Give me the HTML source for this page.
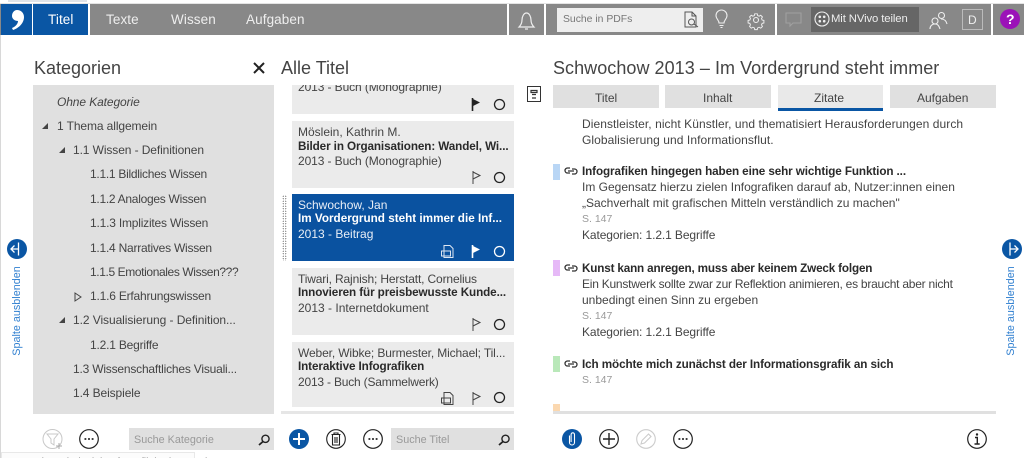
<!DOCTYPE html>
<html><head><meta charset="utf-8">
<style>
html,body{margin:0;padding:0;background:#fff;}
#p{position:relative;width:1024px;height:458px;overflow:hidden;background:#fff;font-family:"Liberation Sans",sans-serif;color:#444;font-size:12px;}
.b{position:absolute;}
.t{position:absolute;white-space:nowrap;line-height:16px;}
.h{font-size:18px;line-height:24px;color:#444;}
.n{font-size:13.5px;line-height:20px;color:#eee;letter-spacing:.1px;}
.k{font-size:12px;color:#444;letter-spacing:-.1px;}
.s{font-weight:bold;font-size:11.7px;color:#2a2a2a;letter-spacing:-.1px;}
.g{color:#999;font-size:10.5px;}
.v{color:#2f7fd0;font-size:10.8px;transform:translate(-50%,-50%) rotate(-90deg);}
svg{position:absolute;overflow:visible;}
</style></head><body><div id="p">
<!-- top nav -->
<div class="b" style="left:8px;top:0;width:79px;height:2px;background:#dfe3e8;"></div>
<div class="b" style="left:0;top:4px;width:1024px;height:31px;background:#888;"></div>
<div class="b" style="left:0;top:3px;width:1024px;height:1px;background:#e4e4e4;"></div>
<div class="b" style="left:1px;top:4px;width:31px;height:31px;background:#0a56a4;"></div>
<div class="b" style="left:32px;top:4px;width:1px;height:31px;background:#fff;"></div>
<div class="b" style="left:33px;top:4px;width:55px;height:31px;background:#0a56a4;"></div>
<div class="b" style="left:88px;top:4px;width:1.5px;height:31px;background:#fff;"></div>
<svg style="left:0;top:0" width="32" height="34"><path d="M17 10c4 0 7 3 7 7 0 6-5 11-11 13l-1-2c3-1 6-4 6-7-3 0-6-2-6-5 0-3 2-6 5-6z" fill="#fff"/></svg>
<div class="t n" style="left:48px;top:10px;color:#fff;">Titel</div>
<div class="t n" style="left:106px;top:10px;">Texte</div>
<div class="t n" style="left:171px;top:10px;">Wissen</div>
<div class="t n" style="left:246px;top:10px;">Aufgaben</div>
<div class="b" style="left:507px;top:4px;width:1.5px;height:31px;background:#fff;"></div>
<div class="b" style="left:544px;top:4px;width:1.5px;height:31px;background:#fff;"></div>
<div class="b" style="left:775px;top:4px;width:1.5px;height:31px;background:#fff;"></div>
<div class="b" style="left:991px;top:4px;width:1.5px;height:31px;background:#fff;"></div>
<!-- bell -->
<svg style="left:518px;top:11px" width="17" height="20" fill="none" stroke="#eee" stroke-width="1.2"><path d="M1 16c2-2 3-4 3-7 0-3 1.600-7 4.500-7S13 6 13 9c0 3 1 5 3 7z"/><path d="M7 18h3"/></svg>
<!-- search pdf -->
<div class="b" style="left:557px;top:8px;width:146px;height:24px;background:#eee;"></div>
<div class="t" style="left:563px;top:12px;color:#777;font-size:10.4px;">Suche in PDFs</div>
<svg style="left:684px;top:11px" width="18" height="18" fill="none" stroke="#555" stroke-width="1"><path d="M1 1h7l4 4v11H1zM8 1v4h4"/><circle cx="7.500" cy="11" r="3"/><path d="M10 13l4 3"/></svg>
<!-- bulb -->
<svg style="left:715px;top:10px" width="13" height="19" fill="none" stroke="#eee" stroke-width="1.100"><path d="M4 13c0-3-3-4-3-7.500a5.300 5.300 0 0 1 11 0C12 9 9 10 9 13zM4.500 15.500h4M5.500 17.500h2"/></svg>
<!-- gear -->
<svg style="left:748px;top:12px" width="16" height="16" fill="none" stroke="#eee" stroke-width="1.100"><circle cx="8" cy="8" r="2.500"/><path d="M6.500 0.800h3l.4 2 1.800.8 1.800-1.100 2 2-1.100 1.800.8 1.800 2 .4v3l-2 .4-.8 1.800 1.100 1.800-2 2-1.800-1.100-1.800.8-.4 2h-3l-.4-2-1.800-.8-1.800 1.100-2-2 1.100-1.800-.8-1.800-2-.4v-3l2-.4.800-1.800-1.100-1.800 2-2 1.800 1.100 1.800-.8z" transform="scale(.86) translate(1.300 1.300)"/></svg>
<!-- comment -->
<svg style="left:785px;top:12px" width="17" height="16" fill="none" stroke="#a0a0a0" stroke-width="1.100"><path d="M1 1h15v10H8l-3 3v-3H1z"/></svg>
<!-- nvivo -->
<div class="b" style="left:811px;top:7px;width:108px;height:25px;background:#666;"></div>
<svg style="left:814px;top:11px" width="16" height="16" fill="none" stroke="#eee" stroke-width="1.100"><circle cx="8" cy="8" r="7"/><g fill="#eee" stroke="none"><circle cx="5.800" cy="5.800" r="1.300"/><circle cx="10.200" cy="5.800" r="1.300"/><circle cx="5.800" cy="10.200" r="1.300"/><circle cx="10.200" cy="10.200" r="1.300"/></g></svg>
<div class="t" style="left:831px;top:11px;color:#eee;font-size:11.3px;letter-spacing:-.1px;">Mit NVivo teilen</div>
<!-- users -->
<svg style="left:929px;top:11px" width="20" height="19" fill="none" stroke="#eee" stroke-width="1.100"><circle cx="12.500" cy="4.500" r="3"/><circle cx="6" cy="10" r="3"/><path d="M1 18c0-3 2-5 5-5s4 2 5 5M12 8c3 0 5 1 6 5"/></svg>
<div class="b" style="left:962px;top:9px;width:19px;height:19px;border:1px solid #bbb;"></div>
<div class="t" style="left:968px;top:12px;color:#eee;font-size:12px;">D</div>
<div class="b" style="left:1000px;top:9px;width:20px;height:20px;border-radius:50%;background:#9b12b8;"></div>
<div class="t" style="left:1006px;top:11px;color:#fff;font-weight:bold;font-size:14px;">?</div>

<!-- Kategorien -->
<div class="b" style="left:33px;top:85px;width:241px;height:329px;background:#e0e0e0;"></div>
<div class="t k" style="left:57px;top:94px;font-style:italic;">Ohne Kategorie</div>
<div class="t k" style="left:57px;top:118px;">1 Thema allgemein</div>
<div class="t k" style="left:73px;top:142px;">1.1 Wissen - Definitionen</div>
<div class="t k" style="left:90px;top:166px;letter-spacing:-.28px;">1.1.1 Bildliches Wissen</div>
<div class="t k" style="left:90px;top:191px;letter-spacing:-.28px;">1.1.2 Analoges Wissen</div>
<div class="t k" style="left:90px;top:215px;letter-spacing:-.2px;">1.1.3 Implizites Wissen</div>
<div class="t k" style="left:90px;top:240px;letter-spacing:-.24px;">1.1.4 Narratives Wissen</div>
<div class="t k" style="left:90px;top:264px;letter-spacing:-.39px;">1.1.5 Emotionales Wissen???</div>
<div class="t k" style="left:90px;top:288px;letter-spacing:-.2px;">1.1.6 Erfahrungswissen</div>
<div class="t k" style="left:73px;top:312px;letter-spacing:-.07px;">1.2 Visualisierung - Definition...</div>
<div class="t k" style="left:90px;top:337px;letter-spacing:-.2px;">1.2.1 Begriffe</div>
<div class="t k" style="left:73px;top:361px;letter-spacing:-.2px;">1.3 Wissenschaftliches Visuali...</div>
<div class="t k" style="left:73px;top:385px;">1.4 Beispiele</div>
<svg style="left:41px;top:122px" width="8" height="8"><path d="M7 1v6H1z" fill="#444"/></svg>
<svg style="left:58px;top:146px" width="8" height="8"><path d="M7 1v6H1z" fill="#444"/></svg>
<svg style="left:58px;top:316px" width="8" height="8"><path d="M7 1v6H1z" fill="#444"/></svg>
<svg style="left:74px;top:292px" width="8" height="10" fill="none" stroke="#444" stroke-width="1"><path d="M1 1l6 4-6 4z"/></svg>

<!-- side toggles -->
<div class="b" style="left:7px;top:239px;width:20px;height:20px;border-radius:50%;background:#0a56a4;"></div>
<svg style="left:7px;top:239px" width="20" height="20" fill="none" stroke="#fff" stroke-width="1.300"><path d="M11.500 3.500v13M11.500 10H4M7.500 6.500L4 10l3.500 3.500"/></svg>
<div class="t v" style="left:17px;top:311px;">Spalte ausblenden</div>
<div class="b" style="left:1002px;top:239px;width:20px;height:20px;border-radius:50%;background:#0a56a4;"></div>
<svg style="left:1002px;top:239px" width="20" height="20" fill="none" stroke="#fff" stroke-width="1.300"><path d="M8 3.500v13M8 10h8M12.500 6.500L16 10l-3.500 3.500"/></svg>
<div class="t v" style="left:1011px;top:311px;">Spalte ausblenden</div>

<!-- list -->
<div class="b" style="left:292px;top:85px;width:222px;height:29px;background:#ebebeb;"></div>
<div class="b" style="left:292px;top:121px;width:222px;height:67px;background:#ebebeb;"></div>
<div class="b" style="left:292px;top:194px;width:222px;height:67px;background:#0a52a0;"></div>
<div class="b" style="left:292px;top:268px;width:222px;height:67px;background:#ebebeb;"></div>
<div class="b" style="left:292px;top:342px;width:222px;height:65px;background:#ebebeb;"></div>
<div class="b" style="left:281px;top:411px;width:233px;height:3px;background:#e6e6e6;"></div>
<div class="b" style="left:282px;top:195px;width:5px;height:66px;background-image:radial-gradient(circle,#777 .6px,transparent .7px);background-size:2.500px 2.500px;"></div>
<div class="t" style="left:298px;top:79px;letter-spacing:-.1px;">2013 - Buch (Monographie)</div>
<div class="b" style="left:292px;top:76px;width:222px;height:9px;background:#fff;"></div>

<!-- headings -->
<div class="t h" style="left:34px;top:56px;">Kategorien</div>
<svg style="left:253px;top:62px" width="12" height="12" stroke="#222" stroke-width="2" fill="none"><path d="M1 1l10 10M11 1L1 11"/></svg>
<div class="t h" style="left:281px;top:56px;">Alle Titel</div>
<div class="t h" style="left:553px;top:56px;letter-spacing:.05px;">Schwochow 2013 – Im Vordergrund steht immer</div>

<div class="t" style="left:298px;top:124px;">Möslein, Kathrin M.</div>
<div class="t s" style="left:298px;top:139px;">Bilder in Organisationen: Wandel, Wi...</div>
<div class="t" style="left:298px;top:153px;letter-spacing:-.1px;">2013 - Buch (Monographie)</div>

<div class="t" style="left:298px;top:197px;color:#e8eef6;">Schwochow, Jan</div>
<div class="t s" style="left:298px;top:211px;color:#fff;letter-spacing:.01px;">Im Vordergrund steht immer die Inf...</div>
<div class="t" style="left:298px;top:226px;color:#e8eef6;">2013 - Beitrag</div>

<div class="t" style="left:298px;top:271px;letter-spacing:-.15px;">Tiwari, Rajnish; Herstatt, Cornelius</div>
<div class="t s" style="left:298px;top:285px;">Innovieren für preisbewusste Kunde...</div>
<div class="t" style="left:298px;top:300px;">2013 - Internetdokument</div>

<div class="t" style="left:298px;top:345px;letter-spacing:-.13px;">Weber, Wibke; Burmester, Michael; Til...</div>
<div class="t s" style="left:298px;top:359px;">Interaktive Infografiken</div>
<div class="t" style="left:298px;top:374px;letter-spacing:-.2px;">2013 - Buch (Sammelwerk)</div>

<!-- flags & circles -->
<svg style="left:471px;top:98px" width="12" height="13"><path d="M1.500 0v13" stroke="#222" stroke-width="1.600"/><path d="M2 1l7 3.500L2 8z" fill="#222"/></svg>
<svg style="left:493px;top:98px" width="13" height="13" fill="none" stroke="#222" stroke-width="1.300"><circle cx="6.500" cy="6.500" r="5"/></svg>
<svg style="left:472px;top:171px" width="12" height="13" fill="none" stroke="#444" stroke-width="1"><path d="M1 0v13M1 1l7 3.500L1 8"/></svg>
<svg style="left:493px;top:171px" width="13" height="13" fill="none" stroke="#222" stroke-width="1.300"><circle cx="6.500" cy="6.500" r="5"/></svg>
<svg style="left:471px;top:245px" width="12" height="13"><path d="M1.500 0v13" stroke="#fff" stroke-width="1.600"/><path d="M2 1l7 3.500L2 8z" fill="#fff"/></svg>
<svg style="left:493px;top:245px" width="13" height="13" fill="none" stroke="#fff" stroke-width="1.300"><circle cx="6.500" cy="6.500" r="5"/></svg>
<svg style="left:441px;top:245px" width="13" height="13" fill="none" stroke="#dde6f2" stroke-width="1"><path d="M3 .5h6l3 3v9H3zM.5 6h9v5h-9z"/></svg>
<svg style="left:472px;top:318px" width="12" height="13" fill="none" stroke="#444" stroke-width="1"><path d="M1 0v13M1 1l7 3.500L1 8"/></svg>
<svg style="left:493px;top:318px" width="13" height="13" fill="none" stroke="#222" stroke-width="1.300"><circle cx="6.500" cy="6.500" r="5"/></svg>
<svg style="left:441px;top:392px" width="13" height="13" fill="none" stroke="#444" stroke-width="1"><path d="M3 .5h6l3 3v9H3zM.5 6h9v5h-9z"/></svg>
<svg style="left:472px;top:392px" width="12" height="13" fill="none" stroke="#444" stroke-width="1"><path d="M1 0v13M1 1l7 3.500L1 8"/></svg>
<svg style="left:493px;top:391px" width="13" height="13" fill="none" stroke="#222" stroke-width="1.300"><circle cx="6.500" cy="6.500" r="5"/></svg>

<!-- right detail -->
<svg style="left:527px;top:86px" width="15" height="17" fill="none" stroke="#333" stroke-width="1"><path d="M.5.500h13v15H.5z"/><path d="M4 4.500h6v2H4zM5 8.500h4M5 12h4" stroke-width="1.200"/></svg>
<div class="b" style="left:553px;top:85px;width:106px;height:23px;background:#e0e0e0;"></div>
<div class="b" style="left:665px;top:85px;width:106px;height:23px;background:#e0e0e0;"></div>
<div class="b" style="left:778px;top:85px;width:105px;height:23px;background:#e9e9e9;"></div>
<div class="b" style="left:778px;top:108px;width:105px;height:3px;background:#0a56a4;"></div>
<div class="b" style="left:890px;top:85px;width:106px;height:23px;background:#e0e0e0;"></div>
<div class="t" style="left:595px;top:90px;">Titel</div>
<div class="t" style="left:703px;top:90px;">Inhalt</div>
<div class="t" style="left:814px;top:90px;">Zitate</div>
<div class="t" style="left:917px;top:90px;">Aufgaben</div>

<div class="t" style="left:582px;top:116px;letter-spacing:.07px;">Dienstleister, nicht Künstler, und thematisiert Herausforderungen durch</div>
<div class="t" style="left:582px;top:132px;letter-spacing:.08px;">Globalisierung und Informationsflut.</div>

<div class="b" style="left:553px;top:164px;width:7px;height:16px;background:#b9d6f5;"></div>
<div class="t s" style="left:582px;top:164px;">Infografiken hingegen haben eine sehr wichtige Funktion ...</div>
<div class="t" style="left:582px;top:179px;">Im Gegensatz hierzu zielen Infografiken darauf ab, Nutzer:innen einen</div>
<div class="t" style="left:582px;top:195px;">„Sachverhalt mit grafischen Mitteln verständlich zu machen"</div>
<div class="t g" style="left:582px;top:211px;">S. 147</div>
<div class="t" style="left:582px;top:227px;letter-spacing:-.1px;">Kategorien: 1.2.1 Begriffe</div>

<div class="b" style="left:553px;top:260px;width:7px;height:16px;background:#e6b9f7;"></div>
<div class="t s" style="left:582px;top:261px;letter-spacing:-.16px;">Kunst kann anregen, muss aber keinem Zweck folgen</div>
<div class="t" style="left:582px;top:276px;letter-spacing:-.24px;">Ein Kunstwerk sollte zwar zur Reflektion animieren, es braucht aber nicht</div>
<div class="t" style="left:582px;top:292px;">unbedingt einen Sinn zu ergeben</div>
<div class="t g" style="left:582px;top:308px;">S. 147</div>
<div class="t" style="left:582px;top:324px;letter-spacing:-.1px;">Kategorien: 1.2.1 Begriffe</div>

<div class="b" style="left:553px;top:356px;width:7px;height:16px;background:#b9e8b9;"></div>
<div class="t s" style="left:582px;top:357px;letter-spacing:-.1px;">Ich möchte mich zunächst der Informationsgrafik an sich</div>
<div class="t g" style="left:582px;top:372px;">S. 147</div>

<div class="b" style="left:553px;top:404px;width:7px;height:7px;background:#fbd8b0;"></div>
<div class="b" style="left:553px;top:411px;width:443px;height:3px;background:#e0e0e0;"></div>

<svg style="left:564px;top:167px" width="14" height="8" fill="none" stroke="#333" stroke-width="1.300"><path d="M6 1H3.500a2.500 2.500 0 0 0 0 5H6M8 2h2.500a2.500 2.500 0 0 1 0 5H8M4 4h6"/></svg>
<svg style="left:564px;top:264px" width="14" height="8" fill="none" stroke="#333" stroke-width="1.300"><path d="M6 1H3.500a2.500 2.500 0 0 0 0 5H6M8 2h2.500a2.500 2.500 0 0 1 0 5H8M4 4h6"/></svg>
<svg style="left:564px;top:360px" width="14" height="8" fill="none" stroke="#333" stroke-width="1.300"><path d="M6 1H3.500a2.500 2.500 0 0 0 0 5H6M8 2h2.500a2.500 2.500 0 0 1 0 5H8M4 4h6"/></svg>

<!-- bottom bars -->
<svg style="left:42px;top:429px" width="22" height="22" fill="none" stroke="#c8c8c8" stroke-width="1"><circle cx="10.500" cy="10" r="9.500"/><path d="M5 5h11l-4 5v6l-3-2v-4z"/><path d="M17 14v6M14 17h6" stroke="#aaa"/></svg>
<svg style="left:79px;top:429px" width="20" height="20" fill="none" stroke="#222" stroke-width="1.200"><circle cx="10" cy="10" r="9.300"/><path d="M5.500 10h1.800M9.100 10h1.800M12.700 10h1.800" stroke-width="1.800"/></svg>
<div class="b" style="left:129px;top:428px;width:145px;height:22px;background:#e0e0e0;"></div>
<div class="t g" style="left:134px;top:432px;font-size:10.8px;">Suche Kategorie</div>
<svg style="left:258px;top:434px" width="13" height="12" fill="none" stroke="#222" stroke-width="1.400"><circle cx="7.500" cy="4.800" r="3.600"/><path d="M5 7.500L1 11" stroke-width="1.800"/></svg>

<div class="b" style="left:289px;top:429px;width:20px;height:20px;border-radius:50%;background:#0a56a4;"></div>
<svg style="left:289px;top:429px" width="20" height="20" stroke="#fff" stroke-width="2" fill="none"><path d="M10 4v12M4 10h12"/></svg>
<svg style="left:326px;top:429px" width="20" height="20" fill="none" stroke="#222" stroke-width="1.100"><circle cx="10" cy="10" r="9.300"/><path d="M5.500 5.500h9M8 5.500V4h4v1.500M6.500 6v10h7V6M9 8v6M11 8v6"/></svg>
<svg style="left:363px;top:429px" width="20" height="20" fill="none" stroke="#222" stroke-width="1.200"><circle cx="10" cy="10" r="9.300"/><path d="M5.500 10h1.800M9.100 10h1.800M12.700 10h1.800" stroke-width="1.800"/></svg>
<div class="b" style="left:391px;top:428px;width:123px;height:22px;background:#e0e0e0;"></div>
<div class="t g" style="left:396px;top:432px;font-size:10.8px;">Suche Titel</div>
<svg style="left:498px;top:434px" width="13" height="12" fill="none" stroke="#222" stroke-width="1.400"><circle cx="7.500" cy="4.800" r="3.600"/><path d="M5 7.500L1 11" stroke-width="1.800"/></svg>

<div class="b" style="left:562px;top:429px;width:20px;height:20px;border-radius:50%;background:#0a56a4;"></div>
<svg style="left:562px;top:429px" width="20" height="20" fill="none" stroke="#fff" stroke-width="1.100"><path d="M7.500 6.500v7a2.500 2.500 0 0 0 5 0V5.500a1.700 1.700 0 0 0-3.400 0V13"/></svg>
<svg style="left:599px;top:429px" width="20" height="20" fill="none" stroke="#222" stroke-width="1.200"><circle cx="10" cy="10" r="9.300"/><path d="M10 4v12M4 10h12" stroke-width="1.400"/></svg>
<svg style="left:636px;top:429px" width="20" height="20" fill="none" stroke="#ccc" stroke-width="1.100"><circle cx="10" cy="10" r="9.300"/><path d="M5 15l1-3.500L12.500 5l2.500 2.500L8.500 14z"/></svg>
<svg style="left:673px;top:429px" width="20" height="20" fill="none" stroke="#222" stroke-width="1.200"><circle cx="10" cy="10" r="9.300"/><path d="M5.500 10h1.800M9.100 10h1.800M12.700 10h1.800" stroke-width="1.800"/></svg>
<svg style="left:967px;top:429px" width="20" height="20" fill="none" stroke="#222" stroke-width="1.200"><circle cx="10" cy="10" r="9.300"/><path d="M8 8.500h2.300V15M7.500 15h5.200" stroke-width="1.400"/><circle cx="10" cy="5.500" r="1.200" fill="#222" stroke="none"/></svg>

<!-- tooltip peek & left edge -->
<div class="b" style="left:1px;top:452px;width:194px;height:6px;background:#fcfcfc;border:1px solid #e8e8e8;border-bottom:none;box-sizing:border-box;"></div>
<div class="t" style="left:6px;top:454px;font-size:10.5px;color:#666;">Anwendungsbeispiel: Infografik in der Praxis</div>
<div class="b" style="left:0;top:35px;width:1px;height:423px;background:#d8d8d8;"></div>
</div></body></html>
